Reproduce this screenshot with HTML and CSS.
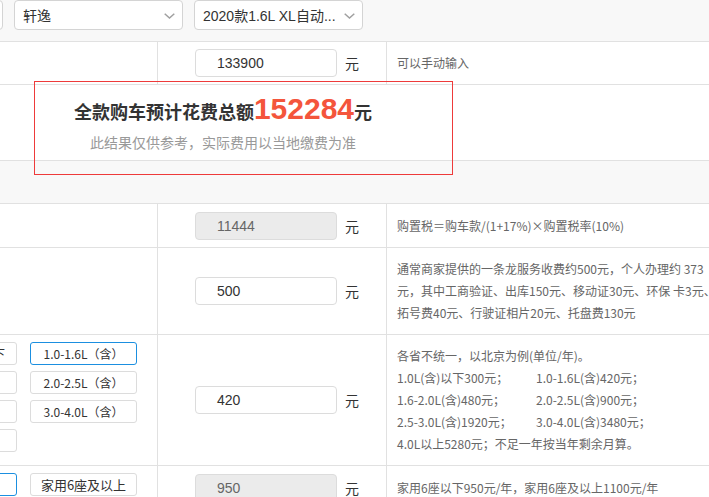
FILE: index.html
```html
<!DOCTYPE html>
<html lang="zh-CN">
<head>
<meta charset="utf-8">
<title>购车计算器</title>
<link rel="stylesheet" href="styles.css">
</head>
<body>
<div class="page">
  <div class="topbar">
    <div class="select"><span class="sel-text">日产</span><svg class="chev" width="11" height="6" viewBox="0 0 11 6"><path d="M0.7 0.7 L5.5 5 L10.3 0.7" fill="none" stroke="#a0a0a0" stroke-width="1.5"/></svg></div>
    <div class="select"><span class="sel-text">轩逸</span><svg class="chev" width="11" height="6" viewBox="0 0 11 6"><path d="M0.7 0.7 L5.5 5 L10.3 0.7" fill="none" stroke="#a0a0a0" stroke-width="1.5"/></svg></div>
    <div class="select"><span class="sel-text">2020款1.6L XL自动...</span><svg class="chev" width="11" height="6" viewBox="0 0 11 6"><path d="M0.7 0.7 L5.5 5 L10.3 0.7" fill="none" stroke="#a0a0a0" stroke-width="1.5"/></svg></div>
  </div>

  <div class="row r-price">
    <div class="c1"></div>
    <div class="c2"><div class="input">133900</div><span class="unit">元</span></div>
    <div class="c3"><p class="note">可以手动输入</p></div>
  </div>

  <div class="row r-blank"></div>
  <div class="section"></div>

  <div class="row r-tax">
    <div class="c1"></div>
    <div class="c2"><div class="input disabled">11444</div><span class="unit">元</span></div>
    <div class="c3"><p class="note">购置税＝购车款/(1+17%)×购置税率(10%)</p></div>
  </div>

  <div class="row r-plate">
    <div class="c1"></div>
    <div class="c2"><div class="input">500</div><span class="unit">元</span></div>
    <div class="c3"><p class="note">通常商家提供的一条龙服务收费约500元，个人办理约 373<br>元，其中工商验证、出库150元、移动证30元、环保 卡3元、<br>拓号费40元、行驶证相片20元、托盘费130元</p></div>
  </div>

  <div class="row r-vvt">
    <div class="c1">
      <div class="btns">
        <span class="btn">1.0L（含）以下</span>
        <span class="btn active">1.0-1.6L（含）</span>
        <span class="btn">1.6-2.0L（含）</span>
        <span class="btn">2.0-2.5L（含）</span>
        <span class="btn">2.5-3.0L（含）</span>
        <span class="btn">3.0-4.0L（含）</span>
        <span class="btn">4.0L以上</span>
      </div>
    </div>
    <div class="c2"><div class="input">420</div><span class="unit">元</span></div>
    <div class="c3">
      <div class="note">
        <div class="line">各省不统一，以北京为例(单位/年)。</div>
        <div class="line"><span class="col">1.0L(含)以下300元；</span><span>1.0-1.6L(含)420元；</span></div>
        <div class="line"><span class="col">1.6-2.0L(含)480元；</span><span>2.0-2.5L(含)900元；</span></div>
        <div class="line"><span class="col">2.5-3.0L(含)1920元；</span><span>3.0-4.0L(含)3480元；</span></div>
        <div class="line">4.0L以上5280元；不足一年按当年剩余月算。</div>
      </div>
    </div>
  </div>

  <div class="row r-ins">
    <div class="c1">
      <div class="btns">
        <span class="btn active">家用6座以下</span>
        <span class="btn">家用6座及以上</span>
      </div>
    </div>
    <div class="c2"><div class="input disabled">950</div><span class="unit">元</span></div>
    <div class="c3"><p class="note">家用6座以下950元/年，家用6座及以上1100元/年</p></div>
  </div>
</div>

<div class="result">
  <div class="result-inner">
    <div class="total">全款购车预计花费总额<span class="amount">152284</span>元</div>
    <div class="hint">此结果仅供参考，实际费用以当地缴费为准</div>
  </div>
</div>
</body>
</html>
```

FILE: styles.css
```css
* { box-sizing: border-box; }

html, body {
  margin: 0;
  padding: 0;
}

body {
  width: 709px;
  height: 497px;
  overflow: hidden;
  position: relative;
  background: #fff;
  font-family: "Liberation Sans", Arial, "Noto Sans CJK SC", sans-serif;
  color: #333;
}

.page {
  width: 709px;
}

.topbar {
  height: 42px;
  background: #f8f8f8;
  border-bottom: 1px solid #e1e1e1;
  display: flex;
  gap: 11px;
  margin-left: -166px;
  align-items: flex-start;
}

.select {
  flex: 0 0 169px;
  height: 30px;
  background: #fff;
  border: 1px solid #d4d4d4;
  border-radius: 4px;
  display: flex;
  align-items: center;
  justify-content: space-between;
  padding: 0 7px 0 8px;
  font-size: 14px;
  color: #333;
  white-space: nowrap;
}

.sel-text {
  font-family: "Liberation Sans", Arial, "Noto Sans CJK SC", sans-serif;
}

.chev {
  flex: none;
  margin-top: 1px;
}

.row {
  display: flex;
  border-bottom: 1px solid #e1e1e1;
  background: #fff;
}

.c1 {
  flex: 0 0 158px;
  border-right: 1px solid #e1e1e1;
  overflow: hidden;
  display: flex;
  justify-content: flex-end;
  padding-right: 20px;
}

.c2 {
  flex: 0 0 229px;
  border-right: 1px solid #e1e1e1;
  display: flex;
  align-items: center;
  padding-left: 37px;
}

.c3 {
  flex: 1 1 auto;
  display: flex;
  align-items: center;
  padding-left: 10px;
  overflow: hidden;
  white-space: nowrap;
}

.r-price { height: 43px; }
.r-blank { height: 76px; border-bottom: 1px solid #e1e1e1; }
.section { height: 43px; background: #f8f8f8; border-bottom: 1px solid #e1e1e1; }
.r-tax { height: 44px; }
.r-plate { height: 87px; }
.r-vvt { height: 131px; }
.r-ins { height: 44px; }

.r-vvt .c1, .r-ins .c1 {
  align-items: flex-start;
  padding-top: 7px;
}

.input {
  width: 142px;
  height: 28px;
  border: 1px solid #dcdcdc;
  border-radius: 4px;
  background: #fff;
  padding-left: 21px;
  line-height: 26px;
  font-size: 14px;
  color: #333;
}

.input.disabled {
  background: #ebebeb;
  color: #666;
}

.unit {
  margin-left: 8px;
  font-size: 14px;
  font-family: "Noto Sans CJK SC", sans-serif;
  color: #333;
}

.note {
  margin: 0;
  font-family: "Noto Sans CJK SC", sans-serif;
  font-size: 12px;
  line-height: 22px;
  color: #666;
}

.col {
  display: inline-block;
  width: 139px;
}

.btns {
  display: grid;
  grid-template-columns: 107px 107px;
  grid-auto-rows: 23px;
  column-gap: 13px;
  row-gap: 6px;
  flex: none;
}

.btn {
  display: flex;
  align-items: center;
  justify-content: center;
  height: 23px;
  border: 1px solid #dcdcdc;
  border-radius: 3px;
  background: #fff;
  font-family: "Noto Sans CJK SC", sans-serif;
  font-size: 12px;
  color: #333;
  white-space: nowrap;
  overflow: hidden;
}

.btn.active {
  border-color: #1b8fe0;
}

.r-ins .btn {
  font-size: 13px;
}

.result {
  position: absolute;
  left: 34px;
  top: 81px;
  width: 419px;
  height: 94px;
  border: 1px solid #ee3a3a;
  padding-top: 9px;
}

.result-inner {
  width: 376px;
  text-align: center;
}

.total {
  font-family: "Noto Sans CJK SC", sans-serif;
  font-weight: bold;
  font-size: 18px;
  color: #333;
  line-height: 36px;
  white-space: nowrap;
}

.amount {
  font-family: "Liberation Sans", Arial, sans-serif;
  font-size: 30px;
  color: #f4553c;
  font-weight: bold;
}

.hint {
  margin-top: 3px;
  font-family: "Noto Sans CJK SC", sans-serif;
  font-size: 14px;
  color: #999;
  line-height: 20px;
  white-space: nowrap;
}
```
